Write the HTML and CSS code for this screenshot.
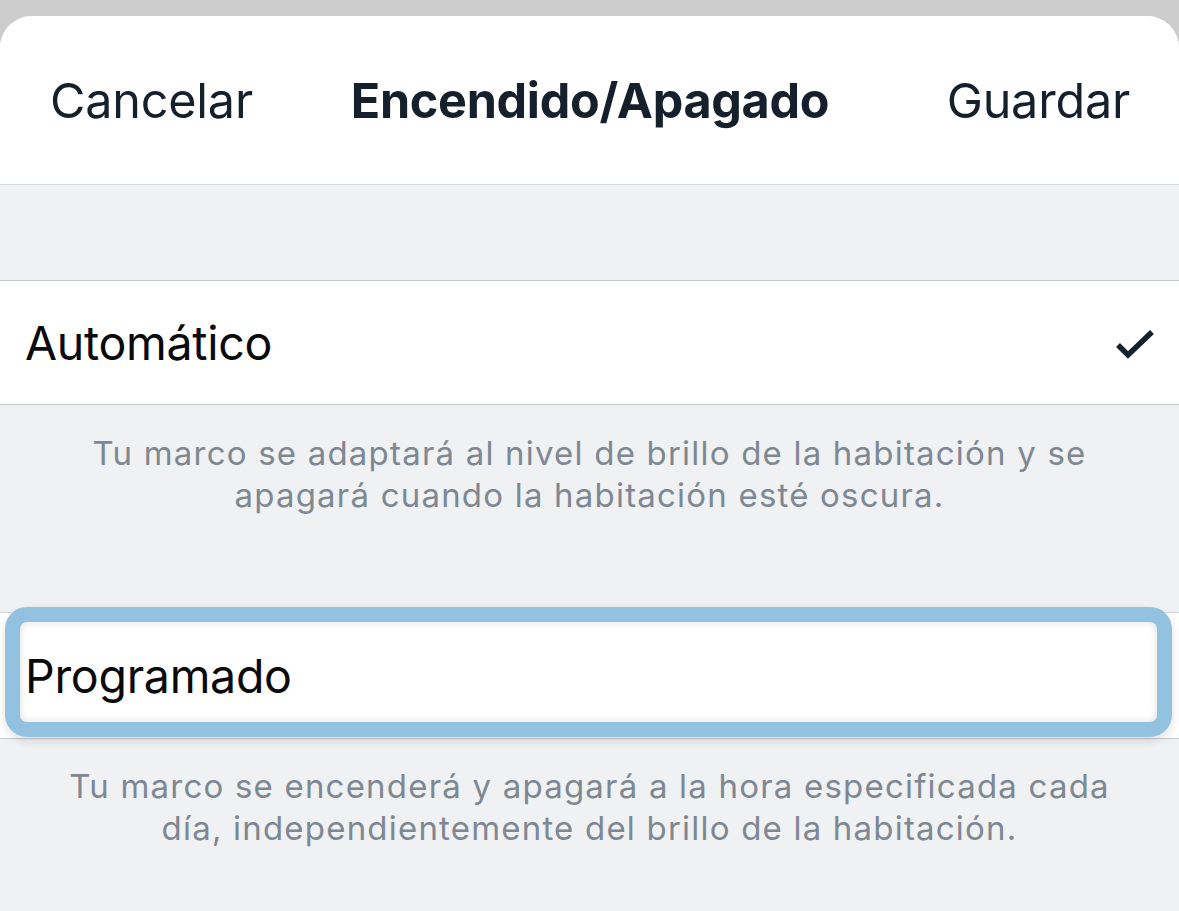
FILE: index.html
```html
<!DOCTYPE html>
<html lang="es">
<head>
<meta charset="utf-8">
<title>Encendido/Apagado</title>
<link rel="stylesheet" href="styles.css">
</head>
<body>
<div class="sheet">
  <header class="nav">
    <span class="nav-btn nav-left">Cancelar</span>
    <span class="nav-title">Encendido/Apagado</span>
    <span class="nav-btn nav-right">Guardar</span>
  </header>
  <div class="spacer"></div>
  <div class="row">
    <span class="row-label">Automático</span>
    <svg class="check" width="40" height="32" viewBox="0 0 40 32"><path d="M3 17 L13 27 L37 4" fill="none" stroke="#16202c" stroke-width="5.5"/></svg>
  </div>
  <p class="footer footer-1">Tu marco se adaptará al nivel de brillo de la habitación y se<br>apagará cuando la habitación esté oscura.</p>
  <div class="row row-2">
    <span class="row-label">Programado</span>
    <div class="highlight"></div>
  </div>
  <p class="footer footer-2">Tu marco se encenderá y apagará a la hora especificada cada<br>día, independientemente del brillo de la habitación.</p>
</div>
</body>
</html>
```

FILE: styles.css
```css
html, body {
  margin: 0;
  padding: 0;
}
body {
  background: #cccccc;
  padding-top: 16px;
  font-family: Inter, "Noto Sans", sans-serif;
  height: 911px;
  box-sizing: border-box;
  overflow: hidden;
}
.sheet {
  background: #f0f1f3;
  border-radius: 32px 32px 0 0;
  overflow: hidden;
  height: 895px;
}
.nav {
  background: #fff;
  height: 168px;
  display: grid;
  grid-template-columns: 1fr auto 1fr;
  align-items: center;
  padding: 0 49px 0 50px;
  border-bottom: 1px solid #d9dadd;
  color: #16202c;
}
.nav-btn {
  font-size: 48.5px;
  font-weight: 400;
  letter-spacing: -0.2px;
}
.nav-left {
  justify-self: start;
}
.nav-right {
  justify-self: end;
}
.nav-title {
  font-size: 48.5px;
  font-weight: 700;
  letter-spacing: -0.3px;
}
.spacer {
  height: 95px;
  border-bottom: 1px solid #c9c9cd;
}
.row {
  background: #fff;
  height: 123px;
  display: flex;
  align-items: center;
  justify-content: space-between;
  padding: 0 24px 0 25px;
  border-bottom: 1px solid #c9c9cd;
}
.row-label {
  font-size: 46.5px;
  color: #0a0a0a;
  letter-spacing: -0.3px;
}
.check {
  display: block;
  margin-top: 2px;
}
.footer {
  margin: 0;
  text-align: center;
  color: #7e8892;
  font-size: 33px;
  line-height: 42px;
  letter-spacing: 1.2px;
}
.footer-1 {
  padding: 27px 0 0;
  height: 208px;
  box-sizing: border-box;
  border-bottom: 1px solid #d4d5d8;
}
.row-2 {
  position: relative;
  height: 125px;
}
.highlight {
  position: absolute;
  left: 5px;
  right: 7px;
  top: -6px;
  bottom: 1px;
  border: 15px solid #93c1e0;
  border-radius: 22px;
  box-shadow: inset 0 0 10px rgba(0, 0, 0, 0.12), 0 4px 10px rgba(0, 0, 0, 0.12);
  pointer-events: none;
}
.footer-2 {
  padding: 26px 0 0;
}
```
